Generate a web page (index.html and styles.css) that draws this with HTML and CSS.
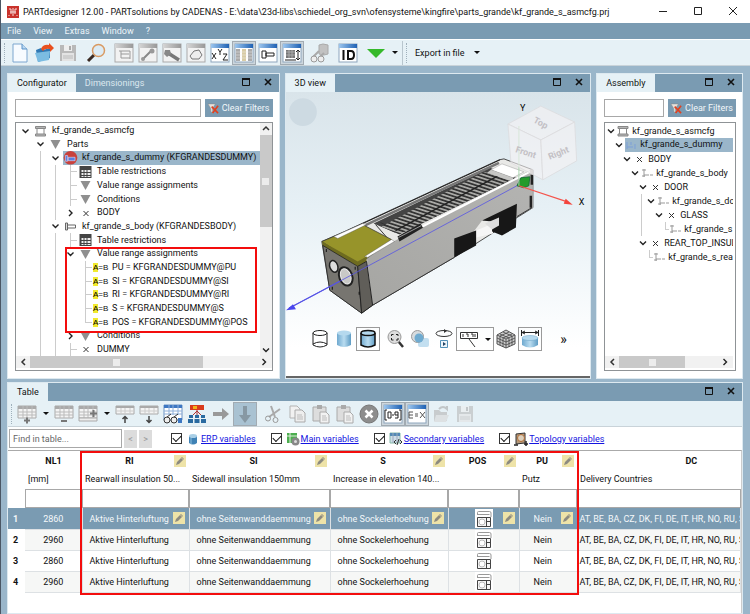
FILE: index.html
```
<!DOCTYPE html>
<html lang="en">
<head>
  <meta charset="UTF-8">
  <title>PARTdesigner 12.00</title>
  <link rel="stylesheet" href="styles.css">
</head>
<body>
  <!-- shared icons -->
  <svg class="icon-defs" aria-hidden="true">
    <defs>
      <linearGradient id="g-bar"><stop offset="0" stop-color="#9cc6ee"/><stop offset="1" stop-color="#1f62b4"/></linearGradient>
      <linearGradient id="g-gray"><stop offset="0" stop-color="#d6d6d6"/><stop offset="1" stop-color="#999"/></linearGradient>
      <linearGradient id="g-cyl"><stop offset="0" stop-color="#6fa9cf"/><stop offset=".5" stop-color="#b9dcf0"/><stop offset="1" stop-color="#5e9cc4"/></linearGradient>
      <symbol id="i-win" viewBox="0 0 20 20"><rect x="1" y="1" width="18" height="18" fill="#fff" stroke="#8ea6bd"/><rect x="1" y="1" width="18" height="4" fill="url(#g-bar)"/></symbol>
      <symbol id="i-wingray" viewBox="0 0 20 20"><rect x="1" y="1" width="18" height="18" fill="#f2f2f2" stroke="#aaa"/><rect x="1" y="1" width="18" height="4" fill="url(#g-gray)"/></symbol>
      <symbol id="i-tri" viewBox="0 0 12 12"><path d="M1 2h10L6 11z" fill="#8f8f8f"/></symbol>
      <symbol id="i-x" viewBox="0 0 12 12"><path d="M4 4l5 5M9 4l-5 5" stroke="#333" fill="none"/></symbol>
      <symbol id="i-down" viewBox="0 0 12 12"><path d="M3 4.500l3 3 3-3" stroke="#222" stroke-width="1.400" fill="none"/></symbol>
      <symbol id="i-right" viewBox="0 0 12 12"><path d="M4.500 3l3 3-3 3" stroke="#222" stroke-width="1.400" fill="none"/></symbol>
      <symbol id="i-asm" viewBox="0 0 12 12"><path d="M1 1.500h10v2H1zM1 9h10v2H1zM2.500 3.500v5.500M9.500 3.500v5.500" fill="#b5b5b5" stroke="#888"/></symbol>
      <symbol id="i-grid" viewBox="0 0 12 12"><rect x="0" y="0" width="12" height="12" fill="#444"/><path d="M2 4h2v2H2zM5 4h2v2H5zM8 4h3v2H8zM2 7h2v2H2zM5 7h2v2H5zM8 7h3v2H8zM2 10h2v1H2zM5 10h2v1H5zM8 10h3v1H8z" fill="#eee"/></symbol>
      <symbol id="i-body" viewBox="0 0 12 12"><path d="M1 3h2v7H1zM3 5h8M3 8h8M11 5v3" fill="#ddd" stroke="#666"/></symbol>
      <symbol id="i-bolt" viewBox="0 0 12 12"><path d="M3 2v8M1 3h4M1 9h3M3 8h5M9 8h3" fill="none" stroke="#999"/></symbol>
      <symbol id="i-dummy" viewBox="0 0 12 12"><circle cx="6" cy="6" r="6" fill="#c8413c"/><path d="M1.500 4h2v5h-2zM4 5.500h6v3H4z" fill="#5a7fe0" stroke="#dfe4ff" stroke-width=".5"/></symbol>
      <symbol id="i-faded" viewBox="0 0 12 12"><path d="M2 3v7M2 8h6M10 5v5M6 3v3" fill="none" stroke="#7c9fd8"/></symbol>
      <symbol id="i-filter" viewBox="0 0 12 12"><path d="M0 1h8L5 6v5L3 9V6z" fill="#e8e2dc" stroke="#888" stroke-width=".5"/><path d="M4 4l7 7M11 3l-6 8" stroke="#e2401e" stroke-width="1.800"/></symbol>
      <symbol id="i-pen" viewBox="0 0 12 12"><rect width="12" height="12" fill="#eee3a8"/><path d="M2 10l1-3 5-5 2 2-5 5z" fill="#8d8b80"/><path d="M7.500 3l2 2" stroke="#d8cf9d"/></symbol>
      <symbol id="i-tbl" viewBox="0 0 20 20"><path d="M1 2h18v12H1z" fill="#f4f4f4" stroke="#aaa"/><path d="M1 2h18v3H1z" fill="#aaa"/><path d="M1 8h18M1 11h18M6 2v12M10 2v12M15 2v12" stroke="#bbb"/></symbol>
      <symbol id="i-doc" viewBox="0 0 20 20"><path d="M3 2h7l3 3v9H3z" fill="#f1f1f1" stroke="#b3b3b3"/><path d="M8 6h7l3 3v9H8z" fill="#eee" stroke="#aaa"/><path d="M10 11h5M10 13h6M10 15h6" stroke="#bbb"/></symbol>
      <symbol id="i-paste" viewBox="0 0 20 20"><path d="M2 3h13v14H2z" fill="#ddd" stroke="#aaa"/><path d="M6 1h5v4H6z" fill="#aaa"/><path d="M9 8h6l3 3v8H9z" fill="#f2f2f2" stroke="#aaa"/><path d="M11 12h4M11 14h5M11 16h5" stroke="#bbb"/></symbol>
      <symbol id="i-pos" viewBox="0 0 18 19"><rect width="18" height="19" fill="#fff"/><path d="M2.500 6V3.500q0-1 1-1h11q1.500 0 1.500 1.500v4M2.500 5.500h12" fill="none" stroke="#999"/><path d="M2.500 8.500h13v9h-13zM11.500 8.500v9M11.500 12.500h4" fill="#f6f6f6" stroke="#444"/><circle cx="7" cy="13" r="3" fill="#fff" stroke="#bbb"/></symbol>
      <symbol id="i-max" viewBox="0 0 10 10"><path d="M1.500 2h7v6.500h-7z" fill="none" stroke="#111"/><path d="M1 2h8" stroke="#111" stroke-width="2"/></symbol>
      <symbol id="i-close" viewBox="0 0 10 10"><path d="M2 2l6 6M8 2l-6 6" stroke="#111" stroke-width="1.600"/></symbol>
      <symbol id="i-floppy" viewBox="0 0 20 20"><path d="M2 2h16v16H2z" fill="#b9b9b9"/><path d="M6 2h8v6H6z" fill="#eee"/><path d="M11 3h2v4h-2z" fill="#aaa"/><path d="M4 10h12v8H4z" fill="#e3e3e3"/><path d="M5 13h10M5 15h10" stroke="#bbb"/></symbol>
    </defs>
  </svg>

  <div class="app">
    <header class="titlebar">
      <svg class="logo" viewBox="0 0 12 12"><rect width="12" height="12" fill="#c9332c"/><path d="M2 3h2v5M10 3H8v5M6 2v8M3 6h6M2 9v1M10 9v1" stroke="#f6dedc" fill="none"/></svg>
      <h1>PARTdesigner 12.00 - PARTsolutions by CADENAS - E:\data\23d-libs\schiedel_org_svn\ofensysteme\kingfire\parts_grande\kf_grande_s_asmcfg.prj</h1>
      <div class="window-buttons">
        <button aria-label="Minimize"><svg viewBox="0 0 10 10"><path d="M1 5.500h8" stroke="#222"/></svg></button>
        <button aria-label="Maximize"><svg viewBox="0 0 10 10"><path d="M1.500 1.500h7v7h-7z" fill="none" stroke="#222"/></svg></button>
        <button aria-label="Close"><svg viewBox="0 0 10 10"><path d="M1 1l8 8M9 1l-8 8" stroke="#222"/></svg></button>
      </div>
    </header>

    <nav class="menubar">
      <a href="#">File</a><a href="#">View</a><a href="#">Extras</a><a href="#">Window</a><a href="#">?</a>
    </nav>

    <div class="toolbar main-toolbar">
      <span class="grip"></span>
      <button class="tool" aria-label="New"><svg viewBox="0 0 20 20"><path d="M3 1h9l5 5v13H3z" fill="#f7fbff" stroke="#7da6cf"/><path d="M12 1v5h5" fill="#bcd9f2" stroke="#5b93c8"/></svg></button>
      <button class="tool" aria-label="Open"><svg viewBox="0 0 20 20"><path d="M2 7l5-2 2 2 7-2v10L4 19z" fill="#2f78b4"/><path d="M1 10l15-2-1 9-11 2z" fill="#7bbce2"/><path d="M7 6q2-5 8-4V0l5 5-4 4V6q-5-1-7 2z" fill="#e8501f"/></svg></button>
      <button class="tool" aria-label="Save"><svg><use href="#i-floppy"/></svg></button>
      <span class="gap"></span>
      <button class="tool" aria-label="Search"><svg viewBox="0 0 20 20"><path d="M8 12l-6 6" stroke="#3a2a22" stroke-width="3"/><circle cx="12.500" cy="7.500" r="6" fill="#dcebf4" stroke="#d99a62" stroke-width="1.500"/></svg></button>
      <span class="gap"></span>
      <button class="tool" aria-label="Structure"><svg viewBox="0 0 20 20"><use href="#i-wingray"/><path d="M5 8h11M7 8v7M7 11h8M7 15h9M16 8v8" stroke="#999" fill="none"/></svg></button>
      <button class="tool" aria-label="Tools"><svg viewBox="0 0 20 20"><use href="#i-wingray"/><path d="M5 16l8-8" stroke="#888" stroke-width="2"/><circle cx="5" cy="16" r="2" fill="#999"/><circle cx="14" cy="8" r="2.500" fill="#999"/></svg></button>
      <button class="tool" aria-label="Part"><svg viewBox="0 0 20 20"><use href="#i-wingray"/><path d="M6 10l11 7" stroke="#777" stroke-width="3.500"/><path d="M3 7h5l1 4-4 3-3-3z" fill="#888"/></svg></button>
      <button class="tool" aria-label="Shape"><svg viewBox="0 0 20 20"><use href="#i-wingray"/><path d="M6 16l-2-3 4-5 5-1 3 5-3 4z" fill="#eee" stroke="#777"/></svg></button>
      <button class="tool" aria-label="Coordinates"><svg viewBox="0 0 20 20"><use href="#i-win"/><path d="M2 10l4 6M6 10l-4 6M8 6l2 3 2-3M10 9v3M13 11h4l-4 6h5" stroke="#222" fill="none"/></svg></button>
      <button class="tool pressed" aria-label="Table view"><svg viewBox="0 0 20 20"><use href="#i-win"/><path d="M2 6h4v12H2zM14 6h4v12h-4z" fill="#aaa"/><path d="M8 6h4v12H8z" fill="#d8cba4"/><path d="M2 9h16M2 12h16M2 15h16" stroke="#eee" stroke-width=".5"/></svg></button>
      <button class="tool" aria-label="Screw view"><svg viewBox="0 0 20 20"><use href="#i-win"/><path d="M4 8h4v7H4zM8 10h8v3H8z" fill="#fff" stroke="#222"/></svg></button>
      <button class="tool pressed" aria-label="Dimensions"><svg viewBox="0 0 20 20"><use href="#i-win"/><path d="M4 7h9v8H4z" fill="#777"/><path d="M4 9h9M4 12h9M7 7v8M10 7v8" stroke="#aaa"/><path d="M3 17h11M16 7v9M14 9l2-2 2 2M14 15l2 2 2-2" stroke="#222" fill="none"/></svg></button>
      <span class="gap"></span>
      <button class="tool" aria-label="Inspect part"><svg viewBox="0 0 20 20"><path d="M9 2l4-1 5 1v9l-4 1-5-1z" fill="#c2c2c2" stroke="#aaa"/><path d="M3 14l6-6M10 14l4-4" stroke="#aaa" stroke-width="2"/><circle cx="4" cy="16" r="3" fill="#eee" stroke="#999"/><circle cx="11" cy="16" r="3" fill="#eee" stroke="#999"/></svg></button>
      <span class="gap"></span>
      <button class="tool" aria-label="ID"><svg viewBox="0 0 20 20"><use href="#i-win"/><path d="M5.500 7v10M10 8h3q3 0 3 4t-3 4h-3z" stroke="#111" stroke-width="2" fill="none"/></svg></button>
      <span class="gap"></span>
      <button class="tool" aria-label="Generate"><svg viewBox="0 0 20 20"><path d="M1 6h18l-9 9z" fill="#35b92a"/></svg></button>
      <button class="caret" aria-label="Generate options"></button>
      <span class="divider"></span>
      <span class="grip"></span>
      <button class="text-tool">Export in file <span class="arrow"></span></button>
    </div>

    <main class="workspace">
      <div class="docks">
        <section class="panel">
          <div class="tabs">
            <button class="tab active">Configurator</button><button class="tab">Dimensionings</button>
            <span class="spacer"></span>
            <button class="dock-button" aria-label="Maximize panel"><svg><use href="#i-max"/></svg></button>
            <button class="dock-button" aria-label="Close panel"><svg><use href="#i-close"/></svg></button>
          </div>
          <div class="panel-body">
            <div class="filter-row">
              <input type="text" aria-label="Filter configurator">
              <button class="clear-button"><svg><use href="#i-filter"/></svg>Clear Filters</button>
            </div>
            <div class="tree-box">
              <div class="tree-view">
                <ul class="tree">
                  <li><svg><use href="#i-down"/></svg><svg><use href="#i-asm"/></svg><span>kf_grande_s_asmcfg</span></li>
                  <li><i></i><svg><use href="#i-down"/></svg><svg><use href="#i-tri"/></svg><span>Parts</span></li>
                  <li class="selected"><i></i><i class="line"></i><svg><use href="#i-down"/></svg><svg class="hot"><use href="#i-dummy"/></svg><span>kf_grande_s_dummy (KFGRANDESDUMMY)</span></li>
                  <li><i></i><i class="line"></i><i class="line"></i><i class="line tee"></i><svg><use href="#i-grid"/></svg><span>Table restrictions</span></li>
                  <li><i></i><i class="line"></i><i class="line"></i><i class="line tee"></i><svg><use href="#i-tri"/></svg><span>Value range assignments</span></li>
                  <li><i></i><i class="line"></i><i class="line"></i><i class="line tee"></i><svg><use href="#i-tri"/></svg><span>Conditions</span></li>
                  <li><i></i><i class="line"></i><i class="line"></i><svg><use href="#i-right"/></svg><svg><use href="#i-x"/></svg><span>BODY</span></li>
                  <li><i></i><i class="line"></i><svg><use href="#i-down"/></svg><svg><use href="#i-body"/></svg><span>kf_grande_s_body (KFGRANDESBODY)</span></li>
                  <li><i></i><i class="line"></i><i class="line"></i><i class="line tee"></i><svg><use href="#i-grid"/></svg><span>Table restrictions</span></li>
                  <li><i></i><i class="line"></i><i class="line"></i><svg><use href="#i-down"/></svg><svg><use href="#i-tri"/></svg><span>Value range assignments</span></li>
                  <li><i></i><i class="line"></i><i class="line"></i><i></i><i class="line tee"></i><b class="ab"><mark>A</mark>=B</b><span>PU = KFGRANDESDUMMY@PU</span></li>
                  <li><i></i><i class="line"></i><i class="line"></i><i></i><i class="line tee"></i><b class="ab"><mark>A</mark>=B</b><span>SI = KFGRANDESDUMMY@SI</span></li>
                  <li><i></i><i class="line"></i><i class="line"></i><i></i><i class="line tee"></i><b class="ab"><mark>A</mark>=B</b><span>RI = KFGRANDESDUMMY@RI</span></li>
                  <li><i></i><i class="line"></i><i class="line"></i><i></i><i class="line tee"></i><b class="ab"><mark>A</mark>=B</b><span>S = KFGRANDESDUMMY@S</span></li>
                  <li><i></i><i class="line"></i><i class="line"></i><i></i><i class="line tee end"></i><b class="ab"><mark>A</mark>=B</b><span>POS = KFGRANDESDUMMY@POS</span></li>
                  <li><i></i><i class="line"></i><i class="line"></i><svg><use href="#i-right"/></svg><svg><use href="#i-tri"/></svg><span>Conditions</span></li>
                  <li><i></i><i class="line"></i><i class="line"></i><i class="line tee"></i><svg><use href="#i-x"/></svg><span>DUMMY</span></li>
                </ul>
                <div class="scroll-v"><svg><path d="M3 7l3-3 3 3" stroke="#333" stroke-width="1.500" fill="none"/></svg><div class="track"><div class="thumb"><span class="knob"></span></div></div><svg><use href="#i-down"/></svg></div>
                <div class="highlight tree-highlight"></div>
              </div>
              <div class="scroll-h"><svg><path d="M7 3l-3 3 3 3" stroke="#333" stroke-width="1.500" fill="none"/></svg><div class="track"><div class="thumb"><span class="knob"></span></div></div><svg><use href="#i-right"/></svg></div>
            </div>
          </div>
        </section>

        <section class="panel">
          <div class="tabs">
            <button class="tab active">3D view</button>
            <span class="spacer"></span>
            <button class="dock-button" aria-label="Maximize panel"><svg><use href="#i-max"/></svg></button>
            <button class="dock-button" aria-label="Close panel"><svg><use href="#i-close"/></svg></button>
          </div>
          <div class="viewer">
            <svg class="scene" viewBox="0 0 306 230">
              <defs>
                <pattern id="slats" width="20" height="3.500" patternUnits="userSpaceOnUse" patternTransform="rotate(18)"><rect width="20" height="4" fill="#303030"/><rect width="20" height="1.800" fill="#a9a9a6"/></pattern>
                <linearGradient id="g-side" x1="0" y1="1" x2="1" y2="0"><stop offset="0" stop-color="#a6a6a3"/><stop offset="1" stop-color="#b4b4b2"/></linearGradient>
              </defs>
              <circle cx="17" cy="17" r="14" fill="#cddae2"/>
              <!-- stove body -->
              <path d="M61 136L214 65l5-1 29 11v38l-16 10-63 40-82 48-11 8-32-23-8-49z" fill="#e9e9e7" stroke="#222" stroke-width=".8"/>
              <path d="M81 161L248 74v39l-16 9-35 4-28 37-82 48z" fill="url(#g-side)"/>
              <path d="M87 211l82-48M232 122l15-9" stroke="#333"/>
              <path d="M88 129L205 73l26 10-109 53-13 2z" fill="#444"/>
              <path d="M96 132l103-55 27 8-112 55z" fill="url(#slats)"/>
              <path d="M110 136L213 81" stroke="#222" stroke-width="1.500"/>
              <path d="M68 136L214 68" stroke="#777" stroke-width="2.500"/>
              <path d="M62 136L215 65" stroke="#222"/>
              <path d="M112 142l23-13 3 4-24 14z" fill="#222"/>
              <path d="M113 143l23-12" stroke="#999"/>
              <path d="M90 130l14 16M95 128l15 7" stroke="#333"/>
              <path d="M206 75l11-6 22 8-11 6z" fill="#fff" stroke="#999" stroke-width=".5"/>
              <path d="M206 75l22 8v4l-26-9z" fill="#c6c6c4"/>
              <path d="M137 132L245 77" stroke="#fff" stroke-width="2"/>
              <path d="M247 80v10M246 101v12" stroke="#222" stroke-width="2.500"/>
              <path d="M36 147l41-17 29 15-34 26z" fill="#97942a" stroke="#333" stroke-width=".7"/>
              <path d="M48 142l29-13 4 1-29 14zM79 162l27-17 3 2-27 16z" fill="#fff" stroke="#555" stroke-width=".4"/>
              <path d="M36 147l36 20 9-5v5l-9 5-35-20z" fill="#6e6b1f"/>
              <path d="M37 151l35 21 4 47-32-23z" fill="#777570" stroke="#222" stroke-width=".8"/>
              <path d="M72 172l9-5 6 44-11 8z" fill="#605e59" stroke="#222"/>
              <ellipse cx="48" cy="172" rx="4" ry="6" fill="#ddd" stroke="#222" stroke-width="1.500" transform="rotate(-20 48 172)"/>
              <ellipse cx="60" cy="182" rx="6" ry="9" fill="#555" stroke="#222" stroke-width="3" transform="rotate(-20 60 182)"/>
              <ellipse cx="60" cy="182" rx="5" ry="8" fill="#c9c9c7" stroke="#eee" transform="rotate(-20 60 182)"/>
              <path d="M40 156h1M69 174h1M46 194h1M73 199h1" stroke="#111" stroke-width="3"/>
              <path d="M191 136l17-7v10l-17 4z" fill="#f6f6f6"/>
              <path d="M169 144l22-8v15l-22 12zM197 126l35-17-1 24-14 8-10-4v-10z" fill="#171717"/>
              <path d="M200 129l14-6v8l-7 4z" fill="#ddd"/>
              <path d="M232 91l4-8 9-1-1 9-5 2z" fill="#249b2b" stroke="#163" stroke-width=".8"/>
              <!-- axes -->
              <path d="M234 91v-60" stroke="#a9d6ae"/>
              <path d="M3 214L54 187 232 91" stroke="#5653e6" stroke-width=".8" fill="none"/>
              <path d="M3 214l51-27" stroke="#5653e6" stroke-width="1.200"/>
              <path d="M0 216l7-6 3 5z" fill="#4a46ee"/>
              <path d="M234 91l48 16" stroke="#f4544c" stroke-width="1.200"/>
              <path d="M281 104l7 6-9-1z" fill="#f4443c"/>
              <text x="235" y="16">Y</text>
              <text x="294" y="110">X</text>
              <!-- view cube -->
              <g fill="#f6f4f5" fill-opacity=".6" stroke="#dcdcde" stroke-width=".8">
                <path d="M256 11l34 16-34 18-33-16z"/><path d="M223 29l33 16 2 40-32-17z"/><path d="M256 45l34-18 2 39-34 19z"/>
              </g>
              <g class="cube-text"><text transform="translate(230 57) rotate(18)">Front</text><text transform="translate(265 65) rotate(-22)">Right</text><text transform="translate(248 27) rotate(28)">Top</text></g>
            </svg>
            <div class="view-tools">
              <button class="tool" aria-label="Wireframe"><svg viewBox="0 0 20 20"><path d="M3 4v12q7 4 14 0V4" fill="#fff" stroke="#222"/><ellipse cx="10" cy="4" rx="7" ry="2.500" fill="#fff" stroke="#222"/><path d="M3 15q7-4 14 0" stroke="#222" fill="none"/></svg></button>
              <button class="tool" aria-label="Shaded"><svg viewBox="0 0 20 20"><path d="M3 4v12q7 4 14 0V4" fill="url(#g-cyl)"/><ellipse cx="10" cy="4" rx="7" ry="2.500" fill="#b5d9ee"/></svg></button>
              <button class="tool framed" aria-label="Shaded with edges"><svg viewBox="0 0 20 20"><path d="M3 4v12q7 4 14 0V4" fill="url(#g-cyl)" stroke="#111" stroke-width="1.500"/><ellipse cx="10" cy="4" rx="7" ry="2.500" fill="#b5d9ee" stroke="#111" stroke-width="1.500"/></svg></button>
              <span class="gap"></span>
              <button class="tool" aria-label="Zoom to fit"><svg viewBox="0 0 20 20"><path d="M12 12l5 6" stroke="#333" stroke-width="2.500"/><circle cx="8.500" cy="8" r="6.500" fill="#ddd" stroke="#999"/><path d="M5.500 7V5.500h2M10 5.500h2V7M5.500 9v2h2M12 9v2h-2" stroke="#222" fill="none"/></svg></button>
              <button class="tool" aria-label="Transparency"><svg viewBox="0 0 20 20"><rect x="8" y="9" width="11" height="9" rx="2" fill="#c3dff0"/><circle cx="7.500" cy="7.500" r="6" fill="#d6dbde" stroke="#999"/><circle cx="9" cy="9" r="4.500" fill="#6fabd0"/></svg></button>
              <button class="tool" aria-label="Rotate"><svg viewBox="0 0 20 20"><ellipse cx="10" cy="4.500" rx="8" ry="3" fill="none" stroke="#333"/><path d="M10 0l3 2-3 2" fill="#333"/><path d="M6.500 11.500h7v7h-7z" fill="#eef6fb" stroke="#5290b8"/><path d="M9 13l3 2-3 2z" fill="#246"/></svg></button>
              <button class="tool framed wide" aria-label="Measure"><svg viewBox="0 0 20 20"><path d="M1.500 3.500h17v6h-17z" fill="#fff" stroke="#333"/><path d="M4 5v3M7 5h2v3M12 5h2v3M16 5v3" stroke="#333" fill="none"/><path d="M10 10l6 8" stroke="#333"/></svg><span class="arrow"></span></button>
              <button class="tool" aria-label="Mesh"><svg viewBox="0 0 20 20"><path d="M10 1l9 5v9l-9 4-9-4V6z" fill="#ccc" stroke="#555"/><path d="M1 6l9 4 9-4M10 10v9M4 5l9 4v9M7 3l9 4v9M16 5L7 9v9M13 3L4 7v9M1 9l9 4 9-4M1 12l9 4 9-4" stroke="#444" fill="none" stroke-width=".8"/></svg></button>
              <button class="tool framed" aria-label="Show dimensions"><svg viewBox="0 0 20 20"><path d="M2 9v7q8 5 16 0V9" fill="url(#g-cyl)"/><ellipse cx="10" cy="9" rx="8" ry="2.500" fill="#b5d9ee" stroke="#6ba3c6" stroke-width=".5"/><path d="M1.500 1v6M18.500 1v6M2 3.500h16M5 2L2 3.500 5 5M15 2l3 1.500L15 5" stroke="#222" fill="none"/></svg></button>
              <button class="more" aria-label="More tools">»</button>
            </div>
          </div>
        </section>

        <section class="panel">
          <div class="tabs">
            <button class="tab active">Assembly</button>
            <span class="spacer"></span>
            <button class="dock-button" aria-label="Maximize panel"><svg><use href="#i-max"/></svg></button>
            <button class="dock-button" aria-label="Close panel"><svg><use href="#i-close"/></svg></button>
          </div>
          <div class="panel-body">
            <div class="filter-row">
              <input type="text" aria-label="Filter assembly">
              <button class="clear-button"><svg><use href="#i-filter"/></svg>Clear Filters</button>
            </div>
            <div class="tree-box assembly-box">
              <ul class="tree compact">
                <li><svg><use href="#i-down"/></svg><svg><use href="#i-asm"/></svg><span>kf_grande_s_asmcfg</span></li>
                <li class="selected"><i></i><svg><use href="#i-down"/></svg><svg class="hot"><use href="#i-faded"/></svg><span>kf_grande_s_dummy</span></li>
                <li><i></i><i></i><svg><use href="#i-down"/></svg><svg><use href="#i-x"/></svg><span>BODY</span></li>
                <li><i></i><i></i><i></i><svg><use href="#i-down"/></svg><svg><use href="#i-bolt"/></svg><span>kf_grande_s_body</span></li>
                <li><i></i><i></i><i></i><i></i><svg><use href="#i-down"/></svg><svg><use href="#i-x"/></svg><span>DOOR</span></li>
                <li><i></i><i></i><i></i><i></i><i class="line"></i><svg><use href="#i-down"/></svg><svg><use href="#i-bolt"/></svg><span>kf_grande_s_do</span></li>
                <li><i></i><i></i><i></i><i></i><i class="line"></i><i></i><svg><use href="#i-down"/></svg><svg><use href="#i-x"/></svg><span>GLASS</span></li>
                <li><i></i><i></i><i></i><i></i><i class="line"></i><i></i><i></i><i class="line tee end"></i><svg><use href="#i-bolt"/></svg><span>kf_grande_s</span></li>
                <li><i></i><i></i><i></i><i></i><svg><use href="#i-down"/></svg><svg><use href="#i-x"/></svg><span>REAR_TOP_INSUL</span></li>
                <li><i></i><i></i><i></i><i></i><i></i><i class="line tee end"></i><svg><use href="#i-bolt"/></svg><span>kf_grande_s_rea</span></li>
              </ul>
              <div class="scroll-h"><svg><path d="M7 3l-3 3 3 3" stroke="#333" stroke-width="1.500" fill="none"/></svg><div class="track"><div class="thumb"><span class="knob"></span></div></div><svg><use href="#i-right"/></svg></div>
            </div>
          </div>
        </section>
      </div>

      <section class="panel table-panel">
        <div class="tabs">
          <button class="tab active">Table</button>
          <span class="spacer"></span>
          <button class="dock-button" aria-label="Maximize panel"><svg><use href="#i-max"/></svg></button>
          <button class="dock-button" aria-label="Close panel"><svg><use href="#i-close"/></svg></button>
        </div>
        <div class="toolbar">
          <span class="grip"></span>
          <button class="tool" aria-label="Add row"><svg viewBox="0 0 20 20"><use href="#i-tbl"/><path d="M7 16.500h6M10 13.500v6" stroke="#777" stroke-width="2"/></svg></button>
          <button class="caret" aria-label="Add row options"></button>
          <button class="tool" aria-label="Remove row"><svg viewBox="0 0 20 20"><use href="#i-tbl"/><path d="M7 17h6" stroke="#777" stroke-width="2"/></svg></button>
          <button class="tool" aria-label="Add column"><svg viewBox="0 0 20 20"><use href="#i-tbl"/><path d="M1 14h18v3H1z" fill="#eee" stroke="#aaa"/><path d="M12 9.500h7M15.500 6v7" stroke="#777" stroke-width="2"/></svg></button>
          <button class="caret" aria-label="Add column options"></button>
          <button class="tool" aria-label="Move up"><svg viewBox="0 0 20 20"><path d="M1 2h18v8H1z" fill="#f4f4f4" stroke="#aaa"/><path d="M1 2h18v2H1z" fill="#aaa"/><path d="M1 7h18M6 4v6M10 4v6M15 4v6" stroke="#ccc"/><path d="M10 19v-6M7.500 15L10 12.500 12.500 15" stroke="#444" stroke-width="1.500" fill="none"/></svg></button>
          <button class="tool" aria-label="Move down"><svg viewBox="0 0 20 20"><path d="M1 2h18v8H1z" fill="#f4f4f4" stroke="#aaa"/><path d="M1 2h18v2H1z" fill="#aaa"/><path d="M1 7h18M6 4v6M10 4v6M15 4v6" stroke="#ccc"/><path d="M10 12v6M7.500 16l2.500 2.500 2.500-2.500" stroke="#444" stroke-width="1.500" fill="none"/></svg></button>
          <button class="tool" aria-label="Preview"><svg viewBox="0 0 20 20"><path d="M1 1h18v15H1z" fill="#fff" stroke="#6c93c4"/><path d="M1 1h18v3H1z" fill="#3d77c2"/><path d="M1 7h18M1 10h18M6 1v10M10 1v10M15 1v10" stroke="#8fb0da"/><circle cx="4" cy="16" r="3" fill="#eee" stroke="#333"/><circle cx="11" cy="16" r="3" fill="#eee" stroke="#333"/><path d="M4 13l4-3M11 13l4-3" stroke="#333"/><path d="M15 14h4v5h-4z" fill="#3d77c2"/></svg></button>
          <button class="tool" aria-label="Hierarchy"><svg viewBox="0 0 20 20"><path d="M3 1h14v5H3z" fill="#d93a1c"/><path d="M6 2h4v3H6z" fill="#f1b21a"/><path d="M10 6v8M10 7l-6 6M10 7l6 6" stroke="#a33" fill="none"/><path d="M2 11h4v3H2zM8 11h4v3H8zM14 11h4v3h-4zM1 15h5v4H1zM7.500 15h5v4h-5zM14 15h5v4h-5z" fill="#2a6aa0"/></svg></button>
          <button class="tool" aria-label="Next"><svg viewBox="0 0 20 20"><path d="M2 8h9V4l7 6-7 6v-4H2z" fill="#999"/></svg></button>
          <button class="tool pressed filled" aria-label="Down"><svg viewBox="0 0 20 20"><path d="M8 2h4v9h4l-6 8-6-8h4z" fill="#8798a3"/></svg></button>
          <span class="gap"></span>
          <button class="tool" aria-label="Cut"><svg viewBox="0 0 20 20"><path d="M8 2l4 11M17 5L6 13" stroke="#aaa" stroke-width="2"/><circle cx="5" cy="14.500" r="2.500" fill="none" stroke="#999"/><circle cx="12.500" cy="16" r="2.500" fill="none" stroke="#999"/></svg></button>
          <button class="tool" aria-label="Copy"><svg><use href="#i-doc"/></svg></button>
          <button class="tool" aria-label="Paste"><svg><use href="#i-paste"/></svg></button>
          <button class="tool" aria-label="Paste special"><svg><use href="#i-paste"/></svg></button>
          <button class="tool" aria-label="Delete"><svg viewBox="0 0 20 20"><circle cx="10" cy="10" r="9" fill="#8d8d8d" stroke="#777"/><path d="M6.500 6.500l7 7M13.500 6.500l-7 7" stroke="#fff" stroke-width="2.500"/></svg></button>
          <button class="tool pressed" aria-label="Ranges"><svg viewBox="0 0 20 20"><use href="#i-win"/><path d="M4 6H2v10h2M16 6h2v10h-2M5 8h3v6H5zM9 11h2M15 11h-3V8h3v6h-3" stroke="#222" fill="none"/></svg></button>
          <button class="tool pressed" aria-label="Expressions"><svg viewBox="0 0 20 20"><use href="#i-win"/><path d="M6 8H2v6h4M2 11h4M8 10h3M8 12h3M13 8l5 6M18 8l-5 6" stroke="#555" fill="none"/></svg></button>
          <button class="tool faded" aria-label="Import"><svg viewBox="0 0 20 20"><path d="M3 6h5l2 2h6v9H3z" fill="#b5b5b5"/><path d="M5 11h13l-3 7H3z" fill="#d8d8d8"/><path d="M8 5q4-4 8 0V2" stroke="#aaa" stroke-width="2" fill="none"/></svg></button>
          <button class="tool faded" aria-label="Save table"><svg><use href="#i-floppy"/></svg></button>
        </div>

        <div class="search-row">
          <input type="text" placeholder="Find in table..." aria-label="Find in table">
          <button class="step" disabled aria-label="Previous">&lt;</button><button class="step" disabled aria-label="Next match">&gt;</button>
          <div class="variables">
            <div class="variable"><input type="checkbox" id="erp" aria-label="ERP variables" checked><svg viewBox="0 0 14 14"><path d="M3 4v7q4 3 8 0V4z" fill="#3f82b5"/><ellipse cx="7" cy="4" rx="4" ry="2" fill="#a9cfe6"/><path d="M5 6v6" stroke="#8fc0df"/></svg><a href="#">ERP variables</a></div>
            <div class="variable"><input type="checkbox" id="mainvars" aria-label="Main variables" checked><svg viewBox="0 0 14 14"><path d="M1 1h10v10H1z" fill="#4cae4f"/><path d="M4 1v10M1 4h10" stroke="#dfeedd"/><circle cx="9.500" cy="9.500" r="4" fill="#888"/><circle cx="9.500" cy="9.500" r="1.500" fill="#ddd"/></svg><a href="#">Main variables</a></div>
            <div class="variable"><input type="checkbox" id="secondary" aria-label="Secondary variables" checked><svg viewBox="0 0 14 14"><path d="M1 1h10v10H1z" fill="#cfdde8" stroke="#8ba"/><path d="M1 1h10v3H1z" fill="#5389b5"/><path d="M4 1v10M8 1v10" stroke="#9ab"/><path d="M7 8l-2 2 2 2M11 8l2 2-2 2M10 7l-2 6" stroke="#333" fill="none"/></svg><a href="#">Secondary variables</a></div>
            <div class="variable"><input type="checkbox" id="topology" aria-label="Topology variables" checked><svg viewBox="0 0 14 14"><path d="M2 2l9-1v10l-9 1z" fill="#b59a7c" stroke="#333"/><circle cx="7" cy="6" r="3.500" fill="#ddd0bd" stroke="#b06c36"/><path d="M0 13h4M10 12h4M12 9v5" stroke="#222" stroke-width="1.500"/></svg><a href="#">Topology variables</a></div>
          </div>
        </div>

        <div class="grid-wrap">
          <table class="grid">
            <colgroup><col class="c-no"><col class="c-nl"><col class="c-ri"><col class="c-si"><col class="c-s"><col class="c-pos"><col class="c-pu"><col></colgroup>
            <thead>
              <tr class="names">
                <th></th><th>NL1</th>
                <th>RI<svg class="pen"><use href="#i-pen"/></svg></th>
                <th>SI<svg class="pen"><use href="#i-pen"/></svg></th>
                <th>S<svg class="pen"><use href="#i-pen"/></svg></th>
                <th>POS<svg class="pen"><use href="#i-pen"/></svg></th>
                <th>PU<svg class="pen"><use href="#i-pen"/></svg></th>
                <th class="wide-name">DC</th>
              </tr>
              <tr class="descriptions">
                <td></td><td>[mm]</td><td>Rearwall insulation 50...</td><td>Sidewall insulation 150mm</td><td>Increase in elevation 140...</td><td></td><td>Putz</td><td>Delivery Countries</td>
              </tr>
              <tr class="filters">
                <td></td>
                <td><input type="text" aria-label="Filter NL1"></td><td><input type="text" aria-label="Filter RI"></td><td><input type="text" aria-label="Filter SI"></td><td><input type="text" aria-label="Filter S"></td><td><input type="text" aria-label="Filter POS"></td><td><input type="text" aria-label="Filter PU"></td><td><input type="text" aria-label="Filter DC"></td>
              </tr>
            </thead>
            <tbody>
              <tr class="current">
                <th>1</th><td class="num">2860</td>
                <td>Aktive Hinterluftung<svg class="pen"><use href="#i-pen"/></svg></td>
                <td>ohne Seitenwanddaemmung<svg class="pen"><use href="#i-pen"/></svg></td>
                <td>ohne Sockelerhoehung<svg class="pen"><use href="#i-pen"/></svg></td>
                <td class="num"><svg class="pos"><use href="#i-pos"/></svg><svg class="pen"><use href="#i-pen"/></svg></td>
                <td class="pu">Nein<svg class="pen"><use href="#i-pen"/></svg></td>
                <td class="dc">AT, BE, BA, CZ, DK, FI, DE, IT, HR, NO, RU, SE, RS</td>
              </tr>
              <tr><th>2</th><td class="num">2960</td><td>Aktive Hinterluftung</td><td>ohne Seitenwanddaemmung</td><td>ohne Sockelerhoehung</td><td class="num"><svg class="pos"><use href="#i-pos"/></svg></td><td class="pu">Nein</td><td class="dc">AT, BE, BA, CZ, DK, FI, DE, IT, HR, NO, RU, SE, RS</td></tr>
              <tr><th>3</th><td class="num">2860</td><td>Aktive Hinterluftung</td><td>ohne Seitenwanddaemmung</td><td>ohne Sockelerhoehung</td><td class="num"><svg class="pos"><use href="#i-pos"/></svg></td><td class="pu">Nein</td><td class="dc">AT, BE, BA, CZ, DK, FI, DE, IT, HR, NO, RU, SE, RS</td></tr>
              <tr><th>4</th><td class="num">2960</td><td>Aktive Hinterluftung</td><td>ohne Seitenwanddaemmung</td><td>ohne Sockelerhoehung</td><td class="num"><svg class="pos"><use href="#i-pos"/></svg></td><td class="pu">Nein</td><td class="dc">AT, BE, BA, CZ, DK, FI, DE, IT, HR, NO, RU, SE, RS</td></tr>
            </tbody>
          </table>
          <div class="highlight grid-highlight"></div>
        </div>
      </section>
    </main>
  </div>
</body>
</html>
```

FILE: styles.css
```
* {
  box-sizing: border-box;
}

body {
  margin: 0;
  font-family: Roboto, "Open Sans", sans-serif;
  font-size: 9px;
  color: #111;
  background-color: #9ab6ca;
}

button, input {
  font: inherit;
  color: inherit;
  margin: 0;
  padding: 0;
  border: none;
  background: none;
}

ul {
  list-style: none;
  margin: 0;
  padding: 0;
}

svg {
  flex: none;
}

.icon-defs {
  position: absolute;
  width: 0;
  height: 0;
}

.app {
  height: 100vh;
  display: flex;
  flex-direction: column;
  overflow: hidden;
  border-left: 1px solid #4a5664;
}

/* title and menu */
.titlebar {
  display: flex;
  align-items: center;
  height: 23px;
  padding-left: 6px;
  background-color: #fff;
}

.logo {
  width: 12px;
  height: 12px;
}

.titlebar h1 {
  flex: 1;
  margin: 0 0 0 4px;
  font-size: 9px;
  font-weight: normal;
  white-space: nowrap;
}

.window-buttons {
  display: flex;
}

.window-buttons button {
  width: 35px;
  height: 22px;
}

.window-buttons svg {
  width: 10px;
  height: 10px;
}

.menubar {
  display: flex;
  align-items: center;
  gap: 12px;
  height: 16px;
  padding-left: 6px;
  background-color: #7a9bb2;
}

.menubar a {
  color: #eef5f9;
  text-decoration: none;
}

/* toolbars */
.toolbar {
  display: flex;
  align-items: center;
  flex: none;
  height: 26px;
  padding-left: 3px;
  background-color: #e6f1f6;
  border-bottom: 1px solid #c9d3d9;
}

.main-toolbar {
  height: 27px;
  border-top: 1px solid #fff;
}

.grip {
  width: 4px;
  height: 20px;
  border-left: 1px dotted #9fb0bb;
}

.gap {
  width: 4px;
}

.tool {
  display: flex;
  align-items: center;
  justify-content: center;
  flex: none;
  width: 24px;
  height: 24px;
}

.tool svg {
  width: 20px;
  height: 20px;
}

.tool.pressed {
  border: 1px solid #a2abb2;
  background-color: #ccd6dd;
}

.tool.filled {
  background-color: #a9c2d2;
}

.tool.framed {
  border: 1px solid #9a9a9a;
}

.tool.wide {
  width: 38px;
  gap: 6px;
}

.tool.faded {
  opacity: 0.6;
}

.arrow, .caret::before {
  content: "";
  display: inline-block;
  border: 3px solid transparent;
  border-top-color: #111;
  border-bottom: none;
}

.caret {
  display: flex;
  align-items: center;
  justify-content: center;
  width: 13px;
  height: 24px;
}

.divider {
  width: 1px;
  height: 24px;
  margin: 0 3px 0 1px;
  background-color: #b9c6ce;
}

.text-tool {
  display: flex;
  align-items: center;
  gap: 9px;
  padding-left: 5px;
}

/* panels */
.workspace {
  flex: 1;
  min-height: 0;
  display: flex;
  flex-direction: column;
  gap: 3px;
  padding: 7px 7px 0 6px;
}

.docks {
  flex: 4 1 0;
  min-height: 0;
  display: grid;
  grid-template-columns: 273fr 307fr 147fr;
  gap: 5px;
}

.panel {
  display: flex;
  flex-direction: column;
  min-width: 0;
  min-height: 0;
  background-color: #fff;
  border: 1px solid #dde9f0;
}

.table-panel {
  flex: 3 1 0;
}

.tabs {
  display: flex;
  flex: none;
  align-items: stretch;
  height: 18px;
  background-color: #7a9bb2;
}

.tab {
  padding: 0 9px;
  color: #dbe7ee;
}

.tab.active {
  background-color: #e6f1f6;
  color: #111;
}

.spacer {
  flex: 1;
}

.dock-button {
  width: 22px;
}

.dock-button svg {
  width: 10px;
  height: 10px;
}

.panel-body {
  flex: 1;
  min-height: 0;
  display: flex;
  flex-direction: column;
  gap: 5px;
  padding: 7px 6px 7px 7px;
}

.filter-row {
  display: flex;
  gap: 4px;
  height: 18px;
}

.filter-row input {
  flex: 1;
  min-width: 0;
  background-color: #fff;
  border: 1px solid #a8a8a8;
}

.clear-button {
  display: flex;
  align-items: center;
  justify-content: center;
  gap: 3px;
  width: 68px;
  background-color: #7a9bb2;
  color: #f2f7fa;
  white-space: nowrap;
}

.clear-button svg {
  width: 11px;
  height: 11px;
}

/* trees */
.tree-box {
  flex: 1;
  min-height: 0;
  display: flex;
  flex-direction: column;
  padding-bottom: 2px;
  border: 1px solid #8f9396;
}

.assembly-box {
  justify-content: space-between;
  padding-right: 2px;
}

.tree-view {
  position: relative;
  flex: 1;
  min-height: 0;
  display: flex;
}

.tree {
  flex: 1;
  min-width: 0;
  display: grid;
  grid-auto-rows: 1fr;
  padding: 1px 0 0 2px;
  overflow: hidden;
}

.tree li {
  display: flex;
  align-items: center;
  min-width: 0;
  min-height: 0;
  line-height: 13px;
  white-space: nowrap;
}

.tree i {
  flex: none;
  align-self: stretch;
  width: 15px;
}

.tree i.line {
  background: linear-gradient(#ccc, #ccc) 7px 0 / 1px 100% no-repeat;
}

.tree i.tee {
  background: linear-gradient(#ccc, #ccc) 7px 0 / 1px 100% no-repeat, linear-gradient(#ccc, #ccc) 7px 50% / 7px 1px no-repeat;
}

.tree i.tee.end {
  background-size: 1px 50%, 7px 1px;
}

.tree svg {
  width: 15px;
  height: 12px;
}

.tree span {
  padding-left: 4px;
}

.tree .selected span, .tree .selected .hot {
  align-self: stretch;
  height: auto;
  background-color: #9ab6ca;
}

.tree .selected span {
  flex: 1;
}

.ab {
  flex: none;
  width: 15px;
  font-family: "Liberation Sans", sans-serif;
  font-size: 8px;
  font-weight: normal;
  line-height: 9px;
}

.ab mark {
  background-color: #f2ea2e;
}

.tree.compact {
  flex: none;
  grid-auto-rows: 14px;
  padding-left: 0;
}

.compact i {
  width: 8px;
}

.compact i.line {
  background-position: 4px 0;
}

.compact i.tee {
  background-position: 4px 0, 4px 50%;
  background-size: 1px 100%, 4px 1px;
}

.compact svg {
  width: 12px;
  height: 12px;
}

.compact span {
  padding-left: 3px;
}

/* scrollbars */
.scroll-v, .scroll-h {
  display: flex;
  flex: none;
  background-color: #f1f1f1;
}

.scroll-v {
  flex-direction: column;
  width: 12px;
}

.scroll-v svg, .scroll-h svg {
  width: 12px;
  height: 12px;
}

.scroll-h {
  height: 12px;
  padding: 0 2px;
}

.track {
  flex: 1;
}

.thumb {
  display: flex;
  align-items: center;
  justify-content: center;
  background-color: #c9c9c9;
}

.scroll-v .thumb {
  height: 44%;
}

.scroll-h .thumb {
  width: 76%;
  height: 100%;
}

.assembly-box .thumb {
  width: 66%;
}

.knob {
  width: 7px;
  height: 7px;
  background-color: #ececec;
}

.highlight {
  position: absolute;
  border: 2px solid #f30d0d;
  pointer-events: none;
}

.tree-highlight {
  left: 49px;
  right: 15px;
  top: 53%;
  bottom: 10%;
}

/* 3d view */
.viewer {
  flex: 1;
  min-height: 0;
  display: flex;
  flex-direction: column;
  padding-bottom: 25px;
  background: linear-gradient(#d9e4ea, #e6f0f5 40%, #fff 90%);
  border-bottom: 2px solid #666;
}

.scene {
  flex: 1;
  min-height: 0;
  width: 100%;
}

.cube-text {
  fill: #c3c0c5;
  font-weight: bold;
}

.view-tools {
  display: flex;
  height: 24px;
  padding-left: 22px;
}

.more {
  margin-left: 14px;
  font-size: 14px;
  width: 16px;
}

/* table */
.search-row {
  display: flex;
  align-items: center;
  flex: none;
  height: 23px;
  padding-left: 1px;
}

.search-row > input {
  width: 113px;
  height: 19px;
  padding-left: 3px;
  border: 1px solid #a8a8a8;
}

.search-row > input::placeholder {
  color: #666;
}

.step {
  width: 13px;
  height: 18px;
  margin-left: 2px;
  background-color: #dcdcdc;
  color: #999;
}

.variables {
  display: flex;
  gap: 15px;
  margin-left: 19px;
}

.variable {
  display: flex;
  align-items: center;
}

.variable svg {
  width: 14px;
  height: 14px;
  margin: 0 1px 0 4px;
}

.variable a {
  color: #1414e0;
}

.variable input {
  appearance: none;
  width: 11px;
  height: 11px;
  background-color: #fff;
  border: 1px solid #333;
}

.variable input:checked::before {
  content: "";
  display: block;
  width: 7px;
  height: 4px;
  margin: 1px;
  border-left: 1px solid #111;
  border-bottom: 1px solid #111;
  transform: rotate(-45deg);
}

.grid-wrap {
  position: relative;
  flex: 1;
  min-height: 0;
  overflow: hidden;
  border-top: 1px solid #aaa;
  border-right: 1px solid #ccc;
}

.grid {
  width: 100%;
  table-layout: fixed;
  border-collapse: collapse;
}

.c-no { width: 17px; }
.c-nl { width: 57px; }
.c-ri { width: 107px; }
.c-si { width: 141px; }
.c-s { width: 118px; }
.c-pos { width: 71px; }
.c-pu { width: 58px; }

.grid th, .grid td {
  padding: 0 0 0 7px;
  text-align: left;
  white-space: nowrap;
  overflow: hidden;
}

.names th {
  height: 19px;
  padding: 0 12px 0 0;
  text-align: center;
  position: relative;
}

.names th:nth-child(2) {
  padding: 0;
}

.pen {
  position: absolute;
  right: 4px;
  top: 4px;
  width: 12px;
  height: 12px;
}

.names .pen {
  right: 3px;
}

.grid .wide-name {
  padding: 0 0 0 65px;
}

.grid .descriptions td {
  height: 18px;
  padding-left: 3px;
}

.grid .filters td {
  height: 20px;
  padding: 0;
}

.filters input {
  display: block;
  width: 100%;
  height: 19px;
  border: 1px solid #a8a8a8;
}

.grid tbody th, .grid tbody td {
  position: relative;
  height: 21px;
  border-bottom: 1px solid #dde1e4;
}

.grid tbody th {
  padding: 0 0 0 5px;
  border-bottom: none;
}

.grid tbody td {
  border-right: 1px solid #dde1e4;
}

.grid tbody .num {
  padding: 0;
  text-align: center;
}

.grid tbody .pu {
  padding-left: 14px;
}

.grid tbody .dc {
  padding-left: 2px;
}

.grid tbody tr:nth-child(even) td {
  background-color: #f6f7f6;
}

.grid .current {
  background-color: #7a9bb2;
  color: #f4f8fa;
}

.pos {
  display: inline-block;
  vertical-align: middle;
  width: 18px;
  height: 19px;
}

.grid-highlight {
  left: 72px;
  top: 0;
  width: 499px;
  height: 144px;
}
```
